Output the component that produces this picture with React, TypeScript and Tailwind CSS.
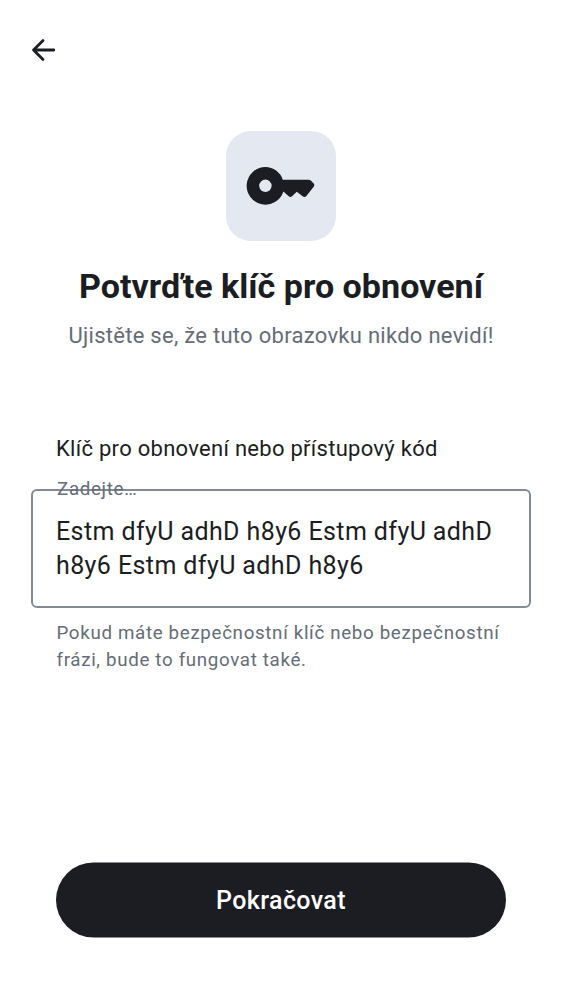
export default function App() {
  return (
    <main className="flex h-[1000px] w-[562px] flex-col overflow-hidden bg-white font-['Roboto',sans-serif] text-[#1b1d22]">
      <header className="flex h-[100px] items-center pl-[28px]">
        <button aria-label="Zpět" className="size-[30px]">
          <svg viewBox="0 0 30 30" className="size-[30px]" fill="none" stroke="currentColor" strokeWidth="2.8" strokeLinecap="round" strokeLinejoin="round"><path d="M25.8 15H5.7M15 5.5 5.5 15l9.5 9.5" /></svg>
        </button>
      </header>
      <section className="mt-[31px] flex flex-col items-center">
        <div className="size-[110px] rounded-[25px] bg-[#e3e8f1]">
          <svg viewBox="0 0 110 110" className="size-[110px]" fill="currentColor">
            <path fillRule="evenodd" d="M39.4 36A18.8 18.8 0 0 1 56.8 48.7H82.8Q84 48.7 84.8 49.5L87.7 52.4Q89 54 87.7 55.7L80.6 64.8Q78.7 67 76.6 65.2L70.8 60.8L66 65.3Q64.4 66.5 62.7 65.2L57.4 60.5A18.8 18.8 0 1 1 39.4 36ZM39.4 48.6A6.2 6.2 0 1 0 39.4 61A6.2 6.2 0 1 0 39.4 48.6Z" />
          </svg>
        </div>
        <h1 className="mt-[22px] whitespace-nowrap text-[34.1px] font-bold leading-[46px]">Potvrďte klíč pro obnovení</h1>
        <p className="mt-[11px] whitespace-nowrap text-[22px] leading-[31px] tracking-[0.28px] text-[#656d77]">Ujistěte se, že tuto obrazovku nikdo nevidí!</p>
      </section>
      <section className="mt-[82px] px-[31px]">
        <label htmlFor="recovery-key" className="block pl-[25px] text-[22px] leading-[31px] tracking-[0.28px]">Klíč pro obnovení nebo přístupový kód</label>
        <div className="relative mt-[25px] h-[119px] w-[500px] rounded-[6px] border-2 border-[#818a95] pl-[23px] pt-[24px] text-[25px] leading-[34px] tracking-[0.4px]">
          <span className="absolute left-[24px] top-[-14px] text-[18.75px] leading-[25px] tracking-[0.66px] text-[#656d77]">Zadejte…</span>
          <div id="recovery-key">Estm dfyU adhD h8y6 Estm dfyU adhD<br />h8y6 Estm dfyU adhD h8y6</div>
        </div>
        <p className="mt-[12px] pl-[25.5px] text-[18.75px] leading-[27px] tracking-[0.66px] text-[#656d77]">Pokud máte bezpečnostní klíč nebo bezpečnostní<br />frázi, bude to fungovat také.</p>
      </section>
      <footer className="mb-[62px] mt-auto px-[56px]">
        <button className="block h-[75px] w-full -translate-y-[0.5px] rounded-full bg-[#1b1d22] text-[25px] font-medium leading-[36px] tracking-[0.4px] text-white">Pokračovat</button>
      </footer>
    </main>
  );
}
